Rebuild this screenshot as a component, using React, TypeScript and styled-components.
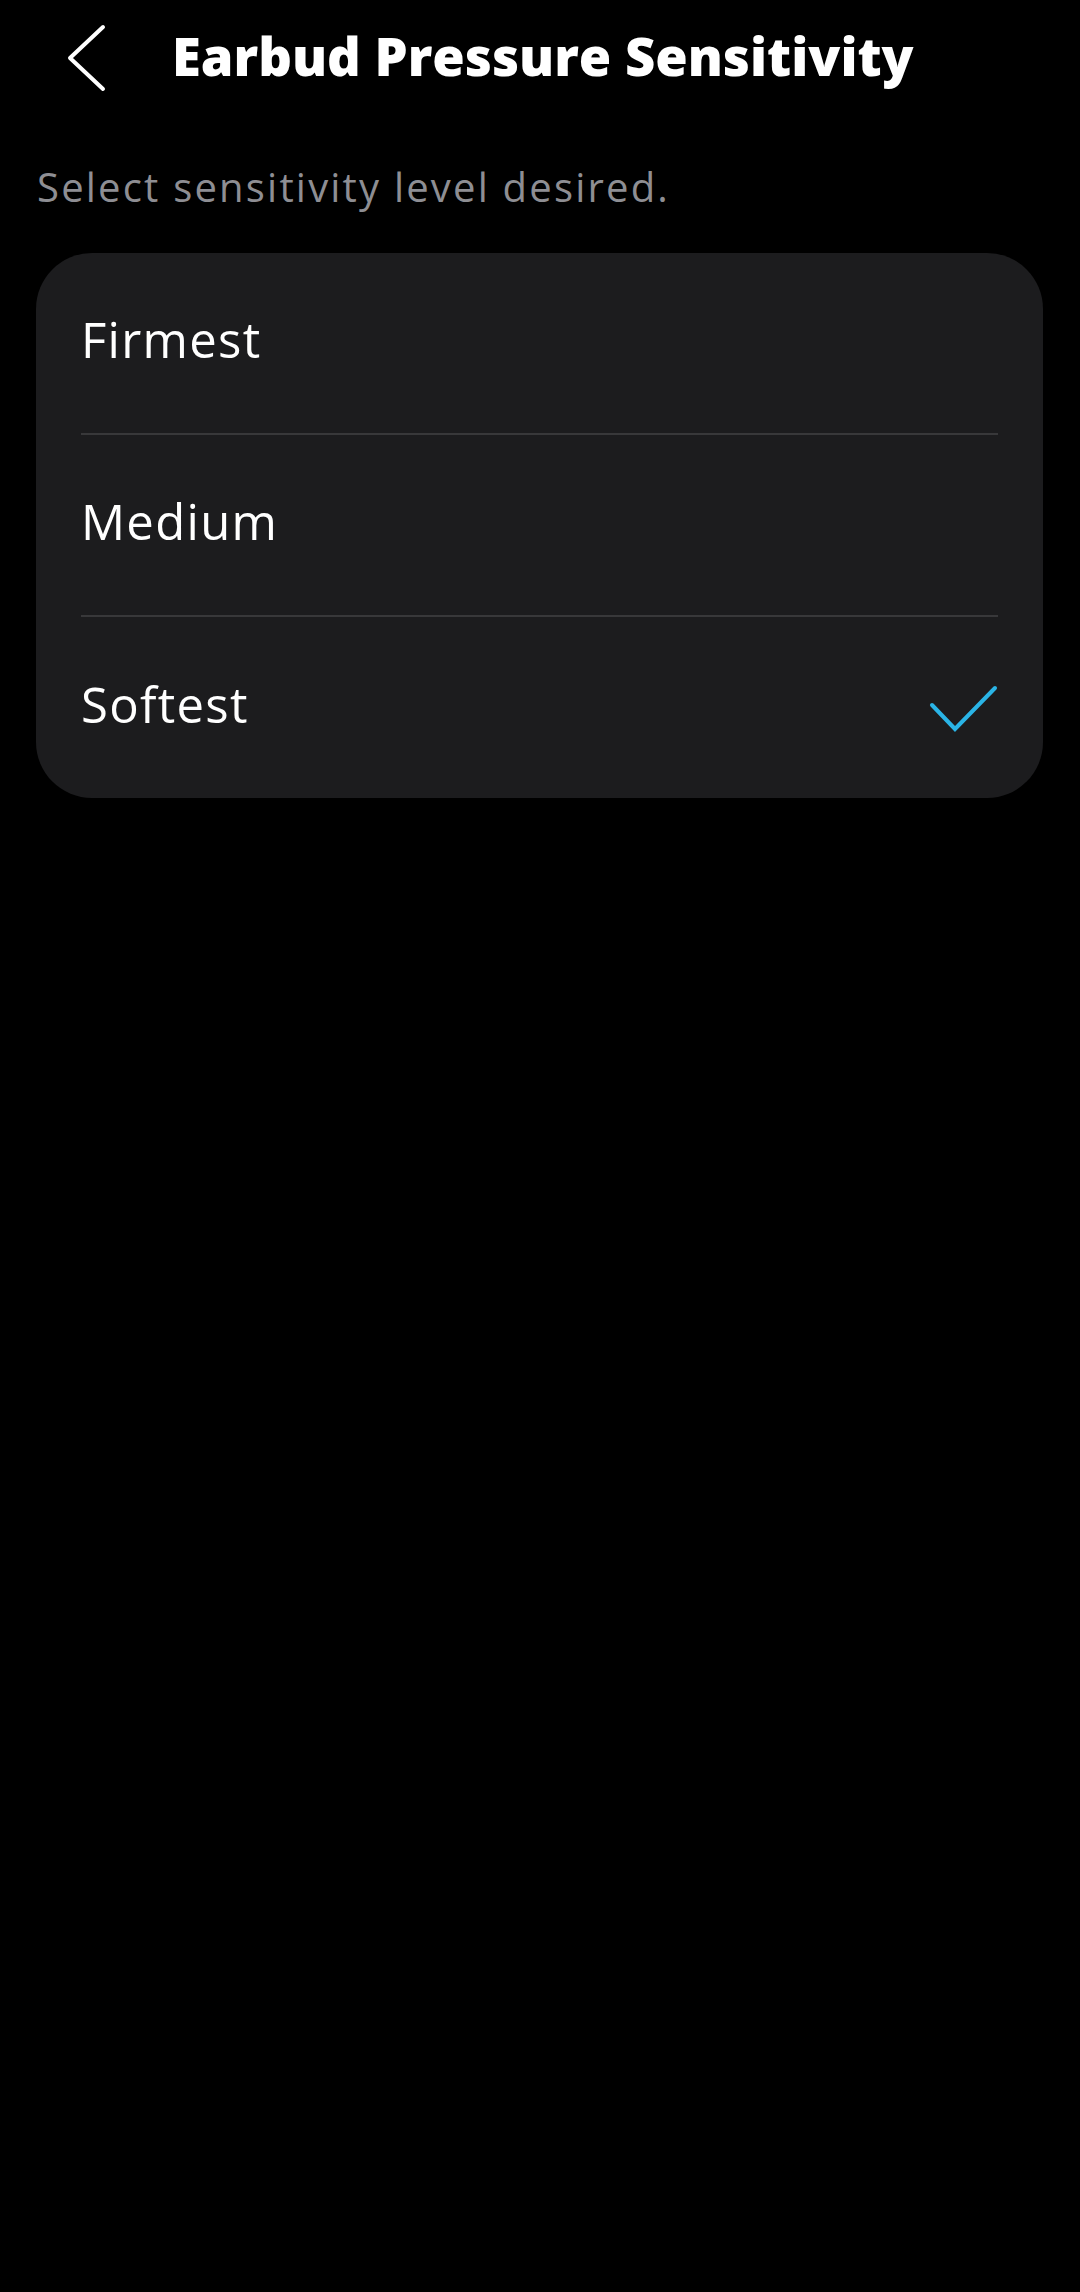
import React from "react";
import styled, {createGlobalStyle} from "styled-components";

const GlobalStyle = createGlobalStyle`
  html, body {
    margin: 0;
    padding: 0;
    background: #000;
  }

  body {
    font-family: "Open Sans", "Liberation Sans", sans-serif;
    color: #fff;
  }
`;

const Screen = styled.div`
  min-height: 2292px;
  background: #000;
  display: flex;
  flex-direction: column;
`;

const Header = styled.header`
  height: 116px;
  display: flex;
  align-items: center;
  padding-left: 64px;
  column-gap: 64px;
`;

const BackButton = styled.button`
  display: flex;
  align-items: center;
  justify-content: center;
  width: 44px;
  height: 72px;
  padding: 0;
  border: none;
  background: transparent;
  cursor: pointer;
`;

const Title = styled.h1`
  margin: 0 0 4px;
  font-size: 52.5px;
  font-weight: 800;
  line-height: 1;
  color: #fff;
`;

const Subtitle = styled.p`
  margin: 47px 0 42px 37px;
  font-size: 40px;
  line-height: 48px;
  letter-spacing: 2.2px;
  color: #8e8e93;
`;

const OptionList = styled.div`
  margin: 0 37px 0 36px;
  background: #1c1c1e;
  border-radius: 56px;
  padding: 0 45px;
  display: flex;
  flex-direction: column;
`;

const OptionRow = styled.div<{ $last?: boolean }>`
  height: ${({$last}) => ($last ? "181px" : "182px")};
  box-sizing: border-box;
  padding-bottom: 8px;
  display: flex;
  align-items: center;
  justify-content: space-between;
  border-bottom: ${({$last}) => ($last ? "none" : "2px solid #38383a")};
`;

const OptionLabel = styled.span`
  font-size: 49px;
  font-weight: 400;
  letter-spacing: 1.3px;
  color: #fff;
`;

const CheckWrap = styled.span`
  display: flex;
  margin-top: 8px;
`;

const ChevronLeft = () => (
    <svg width="44" height="72" viewBox="0 0 44 72" fill="none">
        <path d="M39 5 L6 36 L39 67" stroke="#fff" strokeWidth="4" strokeLinecap="round" strokeLinejoin="round"/>
    </svg>
);

const Check = () => (
    <svg width="70" height="50" viewBox="0 0 70 50" fill="none">
        <path d="M4 22 L27 46 L67 5" stroke="#2ab4e6" strokeWidth="4" strokeLinecap="round" strokeLinejoin="miter"/>
    </svg>
);

const options = ["Firmest", "Medium", "Softest"];
const selected = "Softest";

export default function App() {
    return (
        <Screen>
            <GlobalStyle/>
            <Header>
                <BackButton aria-label="Back">
                    <ChevronLeft/>
                </BackButton>
                <Title>Earbud Pressure Sensitivity</Title>
            </Header>
            <Subtitle>Select sensitivity level desired.</Subtitle>
            <OptionList>
                {options.map((option, i) => (
                    <OptionRow key={option} $last={i === options.length - 1}>
                        <OptionLabel>{option}</OptionLabel>
                        {option === selected && (
                            <CheckWrap>
                                <Check/>
                            </CheckWrap>
                        )}
                    </OptionRow>
                ))}
            </OptionList>
        </Screen>
    );
}
